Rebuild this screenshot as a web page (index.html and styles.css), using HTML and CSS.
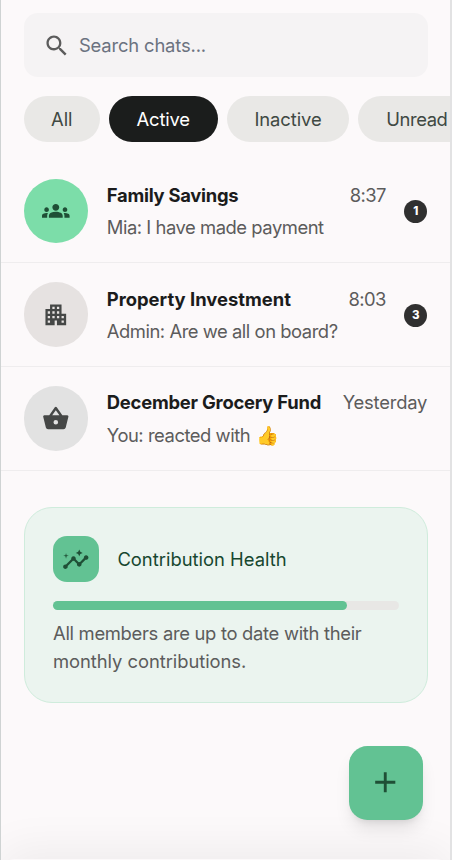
FILE: index.html
```
<!DOCTYPE html>
<html lang="en">
<head>
<meta charset="utf-8">
<meta name="viewport" content="width=device-width, initial-scale=1">
<title>Chats</title>
<link rel="stylesheet" href="styles.css">
</head>
<body>
<div class="screen">
  <main class="content">
    <label class="search">
      <svg class="icon" viewBox="0 0 24 24"><path d="M15.5 14h-.79l-.28-.27C15.41 12.59 16 11.11 16 9.5 16 5.91 13.09 3 9.5 3S3 5.91 3 9.5 5.91 16 9.5 16c1.61 0 3.09-.59 4.23-1.57l.27.28v.79l5 4.99L20.49 19l-4.99-5zm-6 0C7.01 14 5 11.99 5 9.5S7.01 5 9.5 5 14 7.01 14 9.5 11.99 14 9.5 14z"/></svg>
      <span class="search-text">Search chats...</span>
    </label>
    <nav class="chips">
      <span class="chip chip-all">All</span>
      <span class="chip chip-active">Active</span>
      <span class="chip chip-inactive">Inactive</span>
      <span class="chip chip-unread">Unread</span>
    </nav>
    <section class="chats">
      <article class="chat">
        <div class="avatar avatar-green"><svg class="icon" viewBox="0 0 24 24"><path d="M12 12.75c1.63 0 3.07.39 4.24.9 1.08.48 1.76 1.56 1.76 2.73V18H6v-1.61c0-1.18.68-2.26 1.76-2.73 1.17-.52 2.61-.91 4.24-.91zM4 13c1.1 0 2-.9 2-2s-.9-2-2-2-2 .9-2 2 .9 2 2 2zm1.13 1.1c-.37-.06-.74-.1-1.13-.1-.99 0-1.93.21-2.78.58C.48 14.9 0 15.62 0 16.43V18h4.5v-1.61c0-.83.23-1.61.63-2.29zM20 13c1.1 0 2-.9 2-2s-.9-2-2-2-2 .9-2 2 .9 2 2 2zm4 3.43c0-.81-.48-1.53-1.22-1.85-.85-.37-1.79-.58-2.78-.58-.39 0-.76.04-1.13.1.4.68.63 1.46.63 2.29V18H24v-1.57zM12 6c1.66 0 3 1.34 3 3s-1.34 3-3 3-3-1.34-3-3 1.34-3 3-3z"/></svg></div>
        <div class="body">
          <div class="line"><h2 class="name name-family">Family Savings</h2><time class="time">8:37</time></div>
          <p class="message">Mia: I have made payment</p>
        </div>
        <span class="badge">1</span>
      </article>
      <article class="chat">
        <div class="avatar avatar-warm"><svg class="icon" viewBox="0 0 24 24"><path d="M17 11V3H7v4H3v14h8v-4h2v4h8V11h-4zM7 19H5v-2h2v2zm0-4H5v-2h2v2zm0-4H5V9h2v2zm4 4H9v-2h2v2zm0-4H9V9h2v2zm0-4H9V5h2v2zm4 8h-2v-2h2v2zm0-4h-2V9h2v2zm0-4h-2V5h2v2zm4 12h-2v-2h2v2zm0-4h-2v-2h2v2z"/></svg></div>
        <div class="body">
          <div class="line"><h2 class="name">Property Investment</h2><time class="time">8:03</time></div>
          <p class="message">Admin: Are we all on board?</p>
        </div>
        <span class="badge">3</span>
      </article>
      <article class="chat">
        <div class="avatar avatar-gray"><svg class="icon" viewBox="0 0 24 24"><path fill-rule="evenodd" d="M2 9h4.3l4.85-6.95a1.05 1.05 0 0 1 1.7 0L17.7 9H22q.5 0 .8.4t.15.9l-2.3 9.2Q20.25 21 18.7 21H5.3q-1.55 0-1.95-1.5l-2.3-9.2q-.15-.5.15-.9T2 9zm6.85 0h6.3L12 4.5zM12 17a2 2 0 1 0 0-4 2 2 0 0 0 0 4z"/></svg></div>
        <div class="body">
          <div class="line"><h2 class="name name-december">December Grocery Fund</h2><time class="time time-day">Yesterday</time></div>
          <p class="message">You: reacted with <span class="emoji">👍</span></p>
        </div>
      </article>
    </section>
    <section class="health">
      <div class="health-head">
        <div class="tile"><svg class="icon" viewBox="0 0 24 24"><path d="M21 8c-1.45 0-2.26 1.44-1.93 2.51l-3.55 3.56c-.3-.09-.74-.09-1.04 0l-2.55-2.55C12.27 10.45 11.46 9 10 9c-1.45 0-2.27 1.44-1.93 2.52l-4.56 4.55C2.44 15.74 1 16.55 1 18c0 1.1.9 2 2 2 1.45 0 2.26-1.44 1.93-2.51l4.55-4.56c.3.09.74.09 1.04 0l2.55 2.55C12.73 16.55 13.54 18 15 18c1.45 0 2.27-1.44 1.93-2.52l3.56-3.55C21.56 12.26 23 11.45 23 10c0-1.1-.9-2-2-2z"/><path d="M15 9l.94-2.07L18 6l-2.06-.93L15 3l-.92 2.07L12 6l2.08.93zM3.5 11L4 9l2-.5L4 8l-.5-2L3 8l-2 .5L3 9z"/></svg></div>
        <h3 class="health-title">Contribution Health</h3>
      </div>
      <div class="track"><div class="fill"></div></div>
      <p class="health-text"><span class="health-one">All members are up to date with their</span><br><span class="health-two">monthly contributions.</span></p>
    </section>
  </main>
  <button class="fab" aria-label="New chat"><svg class="icon-add" viewBox="0 0 24 24"><path d="M19 13h-6v6h-2v-6H5v-2h6V5h2v6h6v2z"/></svg></button>
  <footer class="bottom"></footer>
</div>
</body>
</html>
```
FILE: styles.css
```
* { box-sizing: border-box; }
html, body { margin: 0; height: 100%; overflow: hidden; }
body {
  font-family: Inter, "Liberation Sans", sans-serif;
  font-size: 18.4px;
  line-height: 27.6px;
  color: #5c5c5c;
  background: #fcf9fa;
}
h2, h3, p { margin: 0; font-size: inherit; }
.screen {
  position: relative;
  display: flex;
  flex-direction: column;
  height: 860px;
  border-left: 1px solid #cfd3d3;
  border-right: 2px solid #e2e2e3;
  background: #fcf9fa;
  overflow: hidden;
}
.content { flex: 1; padding-top: 13px; min-height: 0; }
.icon { width: 27.6px; height: 27.6px; fill: currentColor; flex: none; display: block; }
.search {
  display: flex;
  align-items: center;
  gap: 8.5px;
  height: 64px;
  margin: 0 22.5px 0 23px;
  padding: 1.4px 0 0 18.9px;
  border-radius: 14px;
  background: #f5f3f4;
}
.search-text { color: #6b7280; letter-spacing: -0.16px; }
.chips { display: flex; gap: 9.2px; margin: 19px 0 17.4px 23px; overflow: hidden; }
.chip {
  flex: none;
  height: 46px;
  line-height: 46px;
  border-radius: 23px;
  background: #e9e8e6;
  color: #404943;
  text-align: center;
  letter-spacing: -0.1px;
}
.chip-all { width: 75.5px; }
.chip-active { width: 109px; background: #1b1d1c; color: #fff; letter-spacing: -0.2px; }
.chip-inactive { width: 122.3px; }
.chip-unread { width: 117px; letter-spacing: -0.4px; }
.chat {
  display: flex;
  align-items: center;
  height: 103.8px;
  padding: 0 22.8px 0 23px;
  border-bottom: 1.15px solid #efedee;
}
.avatar {
  display: flex;
  align-items: center;
  justify-content: center;
  flex: none;
  width: 64.4px;
  height: 64.4px;
  margin-right: 18.4px;
  border-radius: 50%;
  color: #454746;
}
.avatar-green { background: #7cdda9; color: #1f4f36; }
.avatar-warm { background: #e6e2e1; }
.avatar-gray { background: #e2e2e2; }
.body {
  flex: 1;
  min-width: 0;
  display: flex;
  flex-direction: column;
  gap: 4.8px;
  padding-top: 2px;
  white-space: nowrap;
}
.line { display: flex; justify-content: space-between; }
.name { font-weight: 700; color: #1b1c1c; }
.name-family { letter-spacing: -0.27px; }
.name-december { letter-spacing: -0.22px; }
.time { letter-spacing: -0.6px; }
.time-day { letter-spacing: -0.2px; }
.message { letter-spacing: -0.46px; }
.badge {
  width: 23px;
  height: 23px;
  margin: 1px 0 0 18.4px;
  border-radius: 50%;
  background: #303030;
  color: #fff;
  font-size: 11.5px;
  font-weight: 800;
  line-height: 23px;
  text-align: center;
}
.emoji { display: inline-block; margin-left: 1px; line-height: 20px; }
.health {
  height: 196px;
  margin: 36.5px 22.5px 0 23px;
  padding: 28.2px 28px;
  border: 1.15px solid #cfecdc;
  border-radius: 28px;
  background: #ebf4ef;
}
.health-head { display: flex; align-items: center; gap: 18.4px; }
.tile {
  display: flex;
  align-items: center;
  justify-content: center;
  width: 46px;
  height: 46px;
  border-radius: 14px;
  background: #62c293;
  color: #1f4f36;
}
.health-title { padding-top: 1px; font-weight: 400; color: #17472f; }
.track { height: 9.2px; margin: 18.4px 0 9px; border-radius: 5px; background: #e8e7e5; }
.fill { width: 85%; height: 100%; border-radius: 5px; background: #62c293; }
.health-text { line-height: 28.2px; white-space: nowrap; }
.health-one { letter-spacing: -0.3px; }
.health-two { letter-spacing: -0.06px; }
.fab {
  position: absolute;
  right: 27.5px;
  bottom: 40.5px;
  z-index: 2;
  display: flex;
  align-items: center;
  justify-content: center;
  width: 74px;
  height: 74px;
  padding: 0;
  border: 0;
  border-radius: 18.4px;
  background: #62c293;
  color: #1f4f36;
  box-shadow: 0 11px 17px -3px rgba(0,0,0,.1), 0 5px 7px -4px rgba(0,0,0,.1);
}
.icon-add { width: 34.5px; height: 34.5px; fill: currentColor; }
.bottom {
  flex: none;
  height: 100px;
  margin-bottom: -99px;
  border-radius: 14px 14px 0 0;
  background: #fcf9fa;
  box-shadow: 0 -9px 46px rgba(0,0,0,.06);
}
```
